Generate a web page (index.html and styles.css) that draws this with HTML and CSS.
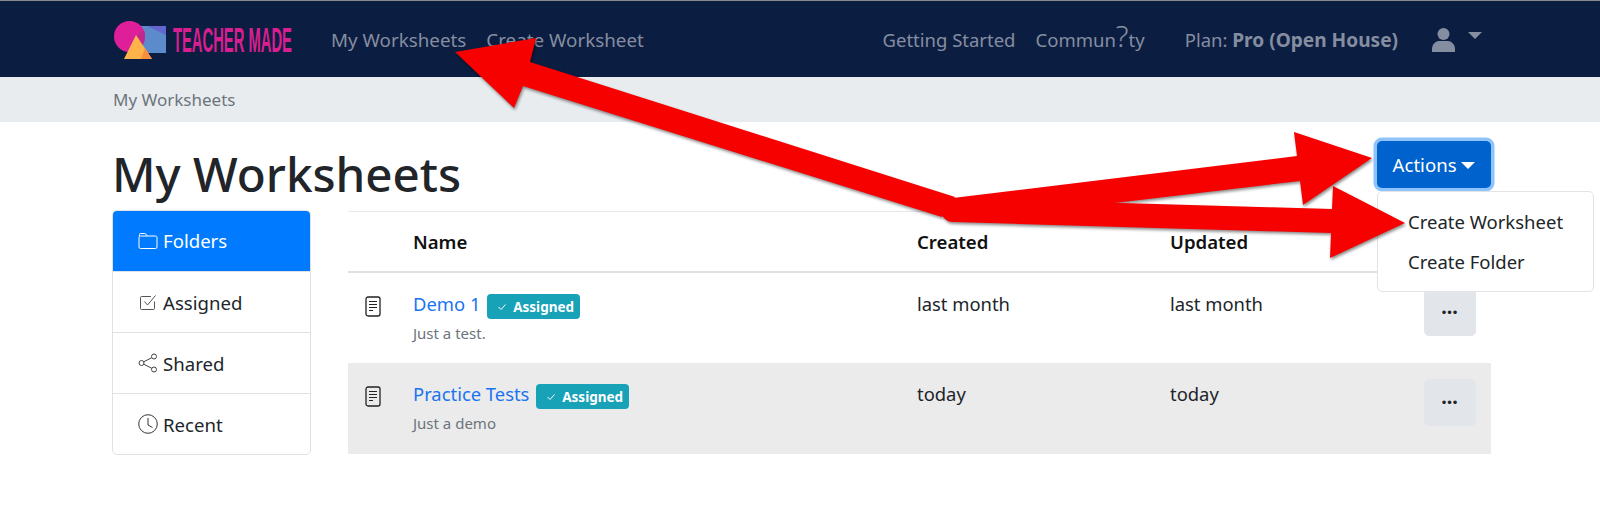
FILE: index.html
```html
<!DOCTYPE html>
<html lang="en">
<head>
  <meta charset="UTF-8" />
  <title>TeacherMade - My Worksheets</title>
  <link rel="stylesheet" href="styles.css">
</head>
<body>
  <nav class="navbar">
    <svg class="logo" width="182" height="44" viewBox="0 0 182 44">
      <rect x="25" y="9" width="28" height="27" fill="#5b8bcb"/>
      <path d="M34 9H53V18Z" fill="#6366cf"/>
      <circle cx="16.500" cy="19.500" r="15.500" fill="#df1f9a"/>
      <path d="M16 35a15.500 15.500 0 0 0 16-15.500q0-3-1-6-7 2-9 9-2 6-6 12.500z" fill="#c2278f"/>
      <path d="M23 18 39 42H11Z" fill="#fdb34a"/>
      <path d="M32 31 39 42H28Z" fill="#f78f3f"/>
      <text class="logo-text" transform="translate(60 35) scale(0.422 1)">TEACHER MADE</text>
    </svg>
    <a class="nav-link nav-first" href="#">My Worksheets</a>
    <a class="nav-link" href="#">Create Worksheet</a>
    <div class="nav-right">
      <a class="nav-link" href="#">Getting Started</a>
      <a class="nav-link" href="#">Commun<span class="odd-glyph">?</span>ty</a>
      <span class="nav-link nav-plan">Plan: <b>Pro (Open House)</b></span>
      <svg class="user-icon" width="25" height="25" viewBox="0 0 25 25">
        <circle cx="12.500" cy="7" r="6" fill="#858ea0"/>
        <path d="M1 25v-3c0-5 4-8 7-8h9c3 0 7 3 7 8v3z" fill="#858ea0"/>
      </svg>
      <span class="caret caret-nav"></span>
    </div>
  </nav>

  <div class="breadcrumb">My Worksheets</div>

  <main class="content">
    <div class="title-row">
      <h1>My Worksheets</h1>
      <div class="actions">
        <button class="btn-actions">Actions <span class="caret"></span></button>
        <div class="dropdown">
          <a href="#">Create Worksheet</a>
          <a href="#">Create Folder</a>
        </div>
      </div>
    </div>

    <div class="columns">
      <ul class="side-list">
        <li class="active">
          <svg width="20" height="20" viewBox="0 0 20 20" fill="none" stroke="currentColor"><path d="M1.500 5V3.500q0-1 1-1h4.200q.8 0 1.300.6L9.300 5"/><rect x="1" y="5" width="18" height="12.500" rx="1.500"/></svg>
          Folders
        </li>
        <li>
          <svg width="20" height="20" viewBox="0 0 20 20" fill="none" stroke="#555"><path d="M16.500 9.500v7q0 1-1 1H3.500q-1 0-1-1V5.500q0-1 1-1H13"/><path d="M6.500 9.500l3 3.500 8-9.500"/></svg>
          Assigned
        </li>
        <li>
          <svg width="20" height="20" viewBox="0 0 20 20" fill="none" stroke="#444"><circle cx="16" cy="3.500" r="2.500"/><circle cx="16" cy="16.500" r="2.500"/><circle cx="3.500" cy="10" r="2.500"/><path d="M5.700 8.800 13.800 4.700M5.700 11.200l8.100 4.100"/></svg>
          Shared
        </li>
        <li>
          <svg width="20" height="20" viewBox="0 0 20 20" fill="none" stroke="#333"><circle cx="10" cy="10" r="9.300"/><path d="M10 4v7l4.500 2.500"/></svg>
          Recent
        </li>
      </ul>

      <table class="sheets">
        <thead>
          <tr>
            <th class="col-icon"></th>
            <th class="col-name">Name</th>
            <th class="col-date">Created</th>
            <th>Updated</th>
            <th class="col-menu"></th>
          </tr>
        </thead>
        <tbody>
          <tr>
            <td class="doc-cell">
              <svg width="16" height="21" viewBox="0 0 16 21" fill="none" stroke="#222"><rect x="1" y="1" width="14" height="19" rx="2" stroke-width="1.300"/><path d="M4 5.500h8M4 8.500h8M4 11.500h8M4 14.500h4" stroke-width="1.200"/></svg>
            </td>
            <td>
              <a class="sheet-name" href="#">Demo 1</a>
              <span class="badge"><svg width="10" height="8" viewBox="0 0 10 8" fill="none" stroke="#fff"><path d="M1.500 4l2.500 2.500 4.500-5"/></svg>Assigned</span>
              <div class="sheet-desc">Just a test.</div>
            </td>
            <td>last month</td>
            <td>last month</td>
            <td><button class="btn-more">&bull;&bull;&bull;</button></td>
          </tr>
          <tr class="row-alt">
            <td class="doc-cell">
              <svg width="16" height="21" viewBox="0 0 16 21" fill="none" stroke="#222"><rect x="1" y="1" width="14" height="19" rx="2" stroke-width="1.300"/><path d="M4 5.500h8M4 8.500h8M4 11.500h8M4 14.500h4" stroke-width="1.200"/></svg>
            </td>
            <td>
              <a class="sheet-name" href="#">Practice Tests</a>
              <span class="badge"><svg width="10" height="8" viewBox="0 0 10 8" fill="none" stroke="#fff"><path d="M1.500 4l2.500 2.500 4.500-5"/></svg>Assigned</span>
              <div class="sheet-desc">Just a demo</div>
            </td>
            <td>today</td>
            <td>today</td>
            <td><button class="btn-more">&bull;&bull;&bull;</button></td>
          </tr>
        </tbody>
      </table>
    </div>
  </main>

  <!-- annotation arrows drawn over the page -->
  <svg class="arrows" width="1600" height="531" viewBox="0 0 1600 531">
    <g class="arrow-group">
      <path d="M455 52 536 38 530 62 955 197 942 217 523 86 514 108Z"/>
      <path d="M1372 158 1294 132 1297 156 953 198 953 222 1300 181 1303 205Z"/>
      <path d="M1405 223 1333 186 1332 209 953 198 953 222 1331 233 1330 258Z"/>
      <circle cx="953" cy="210" r="12"/>
    </g>
  </svg>
</body>
</html>
```

FILE: styles.css
```css
* {
  box-sizing: border-box;
}
body {
  margin: 0;
  font-family: "Noto Sans", sans-serif;
  font-size: 18.400px;
  color: #212529;
  background: #fff;
  overflow: hidden;
}
a {
  text-decoration: none;
}
.navbar {
  display: flex;
  align-items: center;
  height: 77px;
  padding: 0 118px 0 113px;
  background: #0c1d42;
  border-top: 1px solid #8a8a8a;
}
.logo {
  margin-right: 36px;
  flex: none;
}
.logo-text {
  font-family: "Liberation Sans", sans-serif;
  font-size: 35px;
  font-weight: 700;
  fill: #d91f8f;
}
.nav-link {
  color: #858ea0;
  font-size: 18.800px;
  line-height: 26px;
  padding-top: 2px;
  white-space: nowrap;
}
.nav-first {
  margin-right: 20px;
}
.nav-right {
  display: flex;
  align-items: center;
  margin-left: auto;
}
.nav-right .nav-link {
  margin-right: 20px;
  font-size: 18.500px;
}
.nav-right .nav-plan {
  margin: 0 33px 0 20px;
}
.nav-plan b {
  font-size: 19.100px;
}
.odd-glyph {
  font-size: 30px;
  font-weight: 300;
  line-height: 0;
}
.user-icon {
  margin-right: 12px;
}
.caret {
  display: inline-block;
  border-top: 7px solid currentColor;
  border-left: 7px solid transparent;
  border-right: 7px solid transparent;
  vertical-align: 3px;
}
.caret-nav {
  color: #858ea0;
  margin-bottom: 7px;
}
.breadcrumb {
  height: 45px;
  padding: 11px 113px 0;
  background: #e9ecef;
  color: #6c757d;
  font-size: 17px;
}
.content {
  padding: 0 109px 0 112px;
}
.title-row {
  display: flex;
  justify-content: space-between;
  height: 89px;
}
h1 {
  margin: 22px 0 0;
  font-size: 47.500px;
  font-weight: 500;
  line-height: 60px;
  color: #212529;
}
.actions {
  position: relative;
  margin-top: 19px;
}
.btn-actions {
  width: 114px;
  height: 47px;
  border: 0;
  border-radius: 5px;
  background: #0062cc;
  box-shadow: 0 0 0 3.500px #8fc3fb;
  color: #fff;
  font-family: inherit;
  font-size: 18.600px;
}
.dropdown {
  position: absolute;
  top: 50px;
  left: 0;
  z-index: 2;
  width: 217px;
  height: 101px;
  padding: 13px 0;
  background: #fff;
  border: 1px solid #e2e3e5;
  border-radius: 5px;
}
.dropdown a {
  display: block;
  height: 40px;
  padding: 4px 0 0 30px;
  font-size: 18.500px;
  color: #212529;
}
.columns {
  display: flex;
  align-items: flex-start;
  gap: 37px;
}
.side-list {
  flex: none;
  width: 199px;
  margin: -1px 0 0;
  padding: 0;
  list-style: none;
  border: 1px solid #dfe1e4;
  border-radius: 5px;
  overflow: hidden;
  font-size: 18.600px;
}
.side-list li {
  display: flex;
  align-items: center;
  gap: 5px;
  height: 61px;
  padding-left: 25px;
  border-top: 1px solid #dfe1e4;
}
.side-list li:first-child {
  border-top: 0;
}
.side-list .active {
  margin: -1px -1px 0;
  padding-left: 26px;
  background: #007bff;
  color: #fff;
}
.sheets {
  flex: 1;
  border-collapse: collapse;
  border-top: 1px solid #e5e7ea;
}
.sheets th {
  height: 60px;
  padding: 0;
  text-align: left;
  font-size: 18.600px;
  font-weight: 600;
  color: #111;
  border-bottom: 2px solid #dee2e6;
}
.sheets td {
  height: 91px;
  padding: 18px 0 0;
  vertical-align: top;
  color: #212529;
}
.col-icon {
  width: 65px;
}
.col-name {
  width: 504px;
}
.col-date {
  width: 253px;
}
.col-menu {
  width: 67px;
}
.sheets .doc-cell {
  padding: 23px 0 0 17px;
}
.row-alt {
  background: #ebebeb;
}
.sheet-name {
  color: #1a73f0;
}
.badge {
  display: inline-flex;
  align-items: center;
  gap: 6px;
  height: 25px;
  margin-left: 2px;
  padding: 0 6px 0 10px;
  border-radius: 4px;
  background: #17a2b8;
  color: #fff;
  font-size: 13.500px;
  font-weight: 700;
}
.sheet-desc {
  margin-top: 4px;
  font-size: 15px;
  color: #6c757d;
}
.btn-more {
  display: block;
  width: 52px;
  height: 47px;
  margin-top: -2px;
  border: 1px solid #e2e5e9;
  border-radius: 5px;
  background: #e2e6ea;
  color: #212529;
  font-size: 13px;
  letter-spacing: 1px;
}
.arrows {
  position: absolute;
  top: 0;
  left: 0;
  z-index: 5;
  pointer-events: none;
}
.arrow-group {
  fill: #f70000;
  filter: drop-shadow(1px 2px 1.500px rgba(0, 0, 0, 0.45));
}
```
